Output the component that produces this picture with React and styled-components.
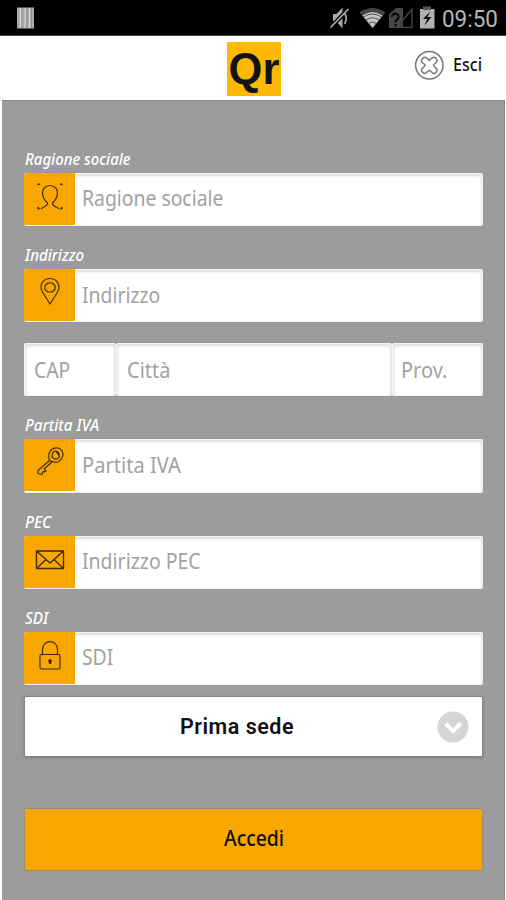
import React from "react";
import styled, { createGlobalStyle } from "styled-components";

const GlobalStyle = createGlobalStyle`
  * { box-sizing: border-box; }
  body { margin: 0; background: #fff; font-family: "Noto Sans", sans-serif; }
`;

const Screen = styled.div`
  width: 506px;
  height: 900px;
  display: flex;
  flex-direction: column;
  overflow: hidden;
  background: #fff;
`;

const StatusBar = styled.div`
  height: 36px;
  flex: none;
  background: #000;
  border-bottom: 1px solid #444;
  display: flex;
  justify-content: space-between;
  align-items: flex-start;
`;

const StatusDrawing = styled.svg`
  display: block;
  flex: none;
`;

const StatusRight = styled.div`
  display: flex;
  height: 36px;
`;

/* Condensed text run: the face is narrowed horizontally from its left edge. */
const Text = styled.span`
  display: block;
  white-space: nowrap;
  font-family: ${(p) => p.$family || '"Noto Sans"'}, sans-serif;
  font-size: ${(p) => p.$size}px;
  font-weight: ${(p) => p.$weight || 400};
  font-style: ${(p) => (p.$italic ? "italic" : "normal")};
  color: ${(p) => p.$color};
  line-height: 1.3;
  letter-spacing: ${(p) => p.$spacing || 0}px;
  transform: scaleX(${(p) => p.$narrow || 1});
  transform-origin: left center;
`;

const Clock = styled.div`
  width: 64px;
  padding-top: 4px;
`;

const Header = styled.header`
  height: 64px;
  flex: none;
  display: grid;
  grid-template-columns: 227px 54px 1fr;
  align-items: start;
`;

const Logo = styled.div`
  grid-column: 2;
  width: 54px;
  height: 54px;
  margin-top: 6px;
  background: #fcb900;
  color: #101419;
  font: bold 43.5px/54px "Liberation Sans", sans-serif;
  display: flex;
  justify-content: center;
`;

const Exit = styled.div`
  display: flex;
  gap: 9px;
  padding: 14px 0 0 133px;
`;

const ExitLabel = styled.div`
  padding-top: 3px;
`;

const Panel = styled.main`
  flex: 1;
  width: 503px;
  margin-left: 2px;
  padding: 44px 21px 0 22px;
  background: #9c9c9c;
  border-top: 1px solid #8b8b8b;
  border-right: 1px solid #868686;
  display: flex;
  flex-direction: column;
`;

const Field = styled.div`
  margin-bottom: ${(p) => p.$after}px;
`;

const Label = styled.div`
  height: 28px;
  margin-left: 1px;
  display: flex;
  align-items: center;
`;

const InputBox = styled.div`
  height: ${(p) => p.$height || 53}px;
  display: flex;
  background: #fff;
  border-radius: 3px;
  box-shadow: inset 0 0 0 1px #f4f4f4, inset 0 3px 3px #ddd, inset -2px 0 2px #e6e6e6, 0 0 1px #777;
  overflow: hidden;
`;

const Cell = styled(InputBox)`
  box-shadow: inset 0 0 0 1px #f4f4f4, inset 0 3px 3px #ddd, inset -2px 0 2px #e6e6e6,
    inset 3px 0 2px #efefef, 0 0 1px #777;
`;

const IconTile = styled.div`
  width: 51px;
  height: 52px;
  flex: none;
  background: #f8a600;
`;

const Placeholder = styled.div`
  display: flex;
  align-items: center;
  padding-left: ${(p) => p.$indent}px;
  height: ${(p) => p.$line || 50}px;
`;

const Triple = styled.div`
  display: grid;
  grid-template-columns: 92px 276px 91px;
  margin-bottom: 15px;
`;

const Select = styled.div`
  height: 61px;
  margin: 0 0 51px;
  background: #fff;
  border: 1px solid #858585;
  border-radius: 2px;
  box-shadow: 0 1px 3px #777;
  display: grid;
  grid-template-columns: 1fr auto;
  align-items: center;
  padding-right: 13px;
`;

const SelectValue = styled.div`
  padding-left: 155px;
`;

const Submit = styled.div`
  height: 63px;
  flex: none;
  background: #f8a600;
  border: 1px solid #98906f;
  border-radius: 2px;
  display: flex;
  align-items: center;
  padding-left: 199px;
  padding-bottom: 3px;
`;

const icons = {
  person: (
    <>
      <path d="M17 36c1-2.500 7-2 6.500-6c-3.500-3-5-6-5-10.500c0-3 2.500-7 7.500-7s7.500 4 7.500 7c0 4.500-1.500 7.500-5 10.500c-.5 4 5.500 3.500 6.500 6" />
      <path d="M13.500 11.500l2.500-.5M38.500 11.500l-2.500-.5M13.500 34.500l2 1.500M38.500 34.500l-2 1.500" strokeWidth="1.700" />
    </>
  ),
  pin: (
    <>
      <path d="M26 35l-7-11c-5-8 .5-14.500 7-14.500s12 6.500 7 14.500z" />
      <path d="M24 14h4l3 2.500v4l-3 2.500h-4l-3-2.500v-4z" />
    </>
  ),
  key: (
    <>
      <path d="M25.500 21.500c-1.500-4-1-8 2-11c4-3 9-1.500 11 2c1.500 5-1 9-5 10.500c-2 .5-4 0-5-.5L20 30l2 2-2 1-1-.5-1 3-4-1v-3z" />
      <path d="M28.500 14.500c1-3 4-3 6-1l1 4c-1 2-3 3-5 2.500l-2.500-2zM25.500 21.500l3 1.500M32 12.500l3 4" />
    </>
  ),
  mail: (
    <path d="M12.500 15h27v17.500h-27zL26 27L39.500 15M12.500 32.500l9.500-9M39.500 32.500l-9.500-9" strokeWidth="1.350" />
  ),
  lock: (
    <>
      <rect x="16" y="22.500" width="20" height="14.500" rx="1.500" />
      <path d="M18.500 22v-4.500c0-10.500 15-10.500 15 0V22" />
      <circle cx="26" cy="29" r="1.300" fill="#3d2b05" />
      <path d="M26 29v3" strokeWidth="2" />
    </>
  ),
};

const LineIcon = ({ name }) => (
  <svg width="51" height="52" viewBox="0 0 51 52" fill="none" stroke="#3d2b05" strokeWidth="1.150" strokeLinejoin="round">
    {icons[name]}
  </svg>
);

const rows = [
  { label: "Ragione sociale", hint: "Ragione sociale", icon: "person", after: 15, line: 50, lw: 0.965, hw: 0.9 },
  { label: "Indirizzo", hint: "Indirizzo", icon: "pin", after: 21, line: 52, lw: 0.97, hw: 0.9 },
  { label: "Partita IVA", hint: "Partita IVA", icon: "key", after: 15, line: 52, height: 54, lw: 0.985, hw: 0.935 },
  { label: "PEC", hint: "Indirizzo PEC", icon: "mail", after: 15, line: 50, lw: 1, hw: 0.905 },
  { label: "SDI", hint: "SDI", icon: "lock", after: 11, line: 50, lw: 0.98, hw: 0.9 },
];

const FormRow = ({ row }) => (
  <Field $after={row.after}>
    <Label>
      <Text $size={15.5} $italic $weight={500} $color="#fff" $narrow={row.lw}>{row.label}</Text>
    </Label>
    <InputBox $height={row.height}>
      <IconTile><LineIcon name={row.icon} /></IconTile>
      <Placeholder $indent={7} $line={row.line}>
        <Text $size={21.5} $color="#a2a2a2" $narrow={row.hw}>{row.hint}</Text>
      </Placeholder>
    </InputBox>
  </Field>
);

const cells = [
  { hint: "CAP", indent: 10, w: 0.9 },
  { hint: "Città", indent: 11, w: 0.93 },
  { hint: "Prov.", indent: 9, w: 0.93 },
];

export default function App() {
  return (
    <Screen>
      <GlobalStyle />
      <StatusBar>
        <StatusDrawing width="40" height="35">
          <path d="M17 7.500h17v21H17z" fill="#aaa" />
          <path d="M20.500 8v20M25 8v20M29.500 8v20" stroke="#ddd" />
          <path d="M22 8v20M27 8v20M31.500 8v20" stroke="#888" strokeWidth=".7" />
        </StatusDrawing>
        <StatusRight>
          <StatusDrawing width="113" height="35" viewBox="328 0 113 35">
            <path d="M332 14h3.500l6-6.500v21l-6-7H332z" fill="#aaa" />
            <path d="M329.500 27.500L347.500 9" stroke="#000" strokeWidth="4" />
            <path d="M329.500 27.500L347.500 9" stroke="#b0b0b0" strokeWidth="1.700" />
            <path d="M343.500 13q3.500 5.500 0 11" stroke="#aaa" fill="none" strokeWidth="1.800" />
            <path d="M358.500 12.500q13-9 26 0L371.500 28z" fill="#444" />
            <path d="M361.500 15.500q10-7 20 0L371.500 28z" fill="#c4c4c4" />
            <path d="M362.500 17q9-6 18 0M365 20q6.500-4.500 13 0M367.500 23.500q4-3 8 0" fill="none" stroke="#555" strokeWidth="1" />
            <path d="M388 14l7-6h7v20h-14z" fill="#474747" />
            <path d="M402 20L411 9v18.500h-9" stroke="#474747" fill="none" strokeWidth="1.300" />
            <path d="M391 17c0-5 7-4 6.500 0c0 2.500-3 2.500-3 5.500M394.500 24v2.500" stroke="#080808" fill="none" strokeWidth="2.200" />
            <path d="M419 9h14.500v19.500H419z" fill="#b2b2b2" />
            <path d="M422 6.500h8V10h-8z" fill="#555" />
            <path d="M429 11.500l-7 7.500h4l-2.500 6.500 7-8.500h-4z" fill="#111" />
          </StatusDrawing>
          <Clock>
            <Text $family="Roboto" $size={23.5} $color="#b5b5b5" $narrow={0.955}>09:50</Text>
          </Clock>
        </StatusRight>
      </StatusBar>
      <Header>
        <Logo>Qr</Logo>
        <Exit>
          <svg width="30" height="30" viewBox="0 0 30 30" fill="none" stroke="#777">
            <circle cx="15.300" cy="15.300" r="13.700" strokeWidth="1.500" />
            <path d="M15.300 10.500C17.500 8 18.500 7 20 7.300s4 2.500 3 4.200-3.500 3-3.500 3.800 2.700 2.600 3.500 4-1.500 4.200-3.200 4.200-3.500-3.300-4.500-3.300-2.800 3.300-4.500 3.300-4-2.700-3.200-4.200 3.500-3.200 3.500-4-2.700-2.200-3.500-3.800 1.500-4 3-4.200 2.500.7 4.700 3.200z" strokeWidth="1.500" />
          </svg>
          <ExitLabel>
            <Text $size={17.5} $weight={500} $color="#111" $narrow={0.92}>Esci</Text>
          </ExitLabel>
        </Exit>
      </Header>
      <Panel>
        {rows.slice(0, 2).map((row) => <FormRow key={row.label} row={row} />)}
        <Triple>
          {cells.map((c) => (
            <Cell key={c.hint}>
              <Placeholder $indent={c.indent} $line={53}>
                <Text $size={21.5} $color="#a2a2a2" $narrow={c.w}>{c.hint}</Text>
              </Placeholder>
            </Cell>
          ))}
        </Triple>
        {rows.slice(2).map((row) => <FormRow key={row.label} row={row} />)}
        <Select>
          <SelectValue>
            <Text $family="Roboto" $size={21.5} $weight={600} $color="#111" $spacing={0.5}>Prima sede</Text>
          </SelectValue>
          <svg width="32" height="32" viewBox="0 0 32 32" fill="none">
            <circle cx="16" cy="16" r="15.500" fill="#d5d5d5" />
            <path d="M8.500 12.500l7.500 7.500 7.500-7.500" stroke="#fff" strokeWidth="4" />
          </svg>
        </Select>
        <Submit>
          <Text $size={21.5} $weight={500} $color="#111" $narrow={0.9}>Accedi</Text>
        </Submit>
      </Panel>
    </Screen>
  );
}
